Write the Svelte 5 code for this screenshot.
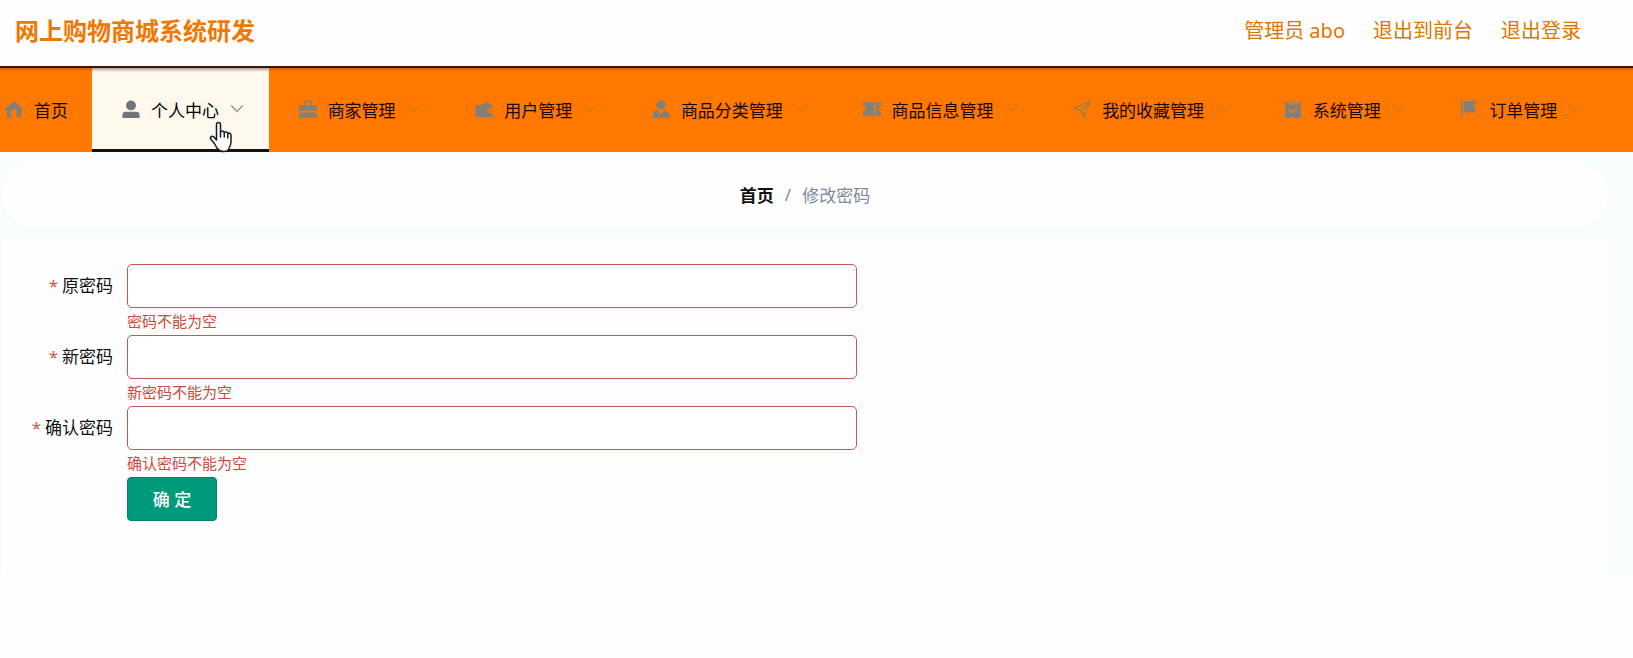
<script lang="ts">
	interface MenuItem {
		label: string;
		icon: string;
		active?: boolean;
	}

	interface Field {
		id: string;
		label: string;
		error: string;
	}

	const menus: MenuItem[] = [
		{ label: '个人中心', icon: 'user', active: true },
		{ label: '商家管理', icon: 'briefcase' },
		{ label: '用户管理', icon: 'wallet' },
		{ label: '商品分类管理', icon: 'custom' },
		{ label: '商品信息管理', icon: 'ticket' },
		{ label: '我的收藏管理', icon: 'position' },
		{ label: '系统管理', icon: 'claim' },
		{ label: '订单管理', icon: 'flag' }
	];

	const fields: Field[] = [
		{ id: 'password', label: '原密码', error: '密码不能为空' },
		{ id: 'newpassword', label: '新密码', error: '新密码不能为空' },
		{ id: 'repassword', label: '确认密码', error: '确认密码不能为空' }
	];

	let form: Record<string, string> = $state({ password: '', newpassword: '', repassword: '' });
</script>

{#snippet icon(name: string)}
	<svg class="icon" viewBox="0 0 20 20" aria-hidden="true">
		{#if name === 'home'}
			<path d="M10 1 .5 9.5V11H2v8.500h5V13a3 3 0 0 1 6 0v6.500h5V11h1.500V9.500z" />
		{:else if name === 'user'}
			<circle cx="10" cy="6" r="5.5" />
			<path d="M.5 20v-3.500A3.500 3.500 0 0 1 4 13h12a3.500 3.500 0 0 1 3.500 3.500V20z" />
		{:else if name === 'briefcase'}
			<path
				fill-rule="evenodd"
				d="M5.500 6V3A2.500 2.500 0 0 1 8 .5h4A2.500 2.500 0 0 1 14.500 3v3H19a1 1 0 0 1 1 1v5H0V7a1 1 0 0 1 1-1zM7 6h6V3a1 1 0 0 0-1-1H8a1 1 0 0 0-1 1zM0 14h20v5a1 1 0 0 1-1 1H1a1 1 0 0 1-1-1z"
			/>
		{:else if name === 'wallet'}
			<path
				d="M7 5.500 14 1l3 4.500h1.500a1 1 0 0 1 1 1v3H16a2.500 2.500 0 0 0 0 5h3.500V18a1 1 0 0 1-1 1h-17a1 1 0 0 1-1-1V6.500a1 1 0 0 1 1-1z"
			/>
			<circle cx="16.5" cy="12" r="1" />
		{:else if name === 'custom'}
			<circle cx="10" cy="5.5" r="5" />
			<path d="M0 20c0-5 2-8 6-9l4 5 4-5c4 1 6 4 6 9z" />
		{:else if name === 'ticket'}
			<path d="M0 2.500h12.500v15H0V13a3 3 0 0 0 0-6zM14 2.500h6V7a3 3 0 0 0 0 6v4.500h-6z" />
		{:else if name === 'position'}
			<path class="line" d="M19 1 1 9l8 3 2.500 7.500zM9 12l9.500-10.500" />
		{:else if name === 'claim'}
			<path
				fill-rule="evenodd"
				d="M2 2.500h3.500V5h9V2.500H18a1 1 0 0 1 1 1V19a1 1 0 0 1-1 1H2a1 1 0 0 1-1-1V3.500a1 1 0 0 1 1-1zM5 11l4 4.300L15.300 9l-1.200-1.200-5 5.200-2.900-3.200z"
			/>
			<path d="M7 3.500V2h2V.5h2V2h2v1.500z" />
		{:else if name === 'flag'}
			<path d="M1 .5h1.500V20H1zM4 1h15l-4 6.500 4 6.500H4z" />
		{/if}
	</svg>
{/snippet}

<header class="header">
	<h1 class="title">网上购物商城系统研发</h1>
	<div class="account">
		<span>管理员 abo</span>
		<a href="#front">退出到前台</a>
		<a href="#logout">退出登录</a>
	</div>
</header>

<nav class="nav">
	<a class="nav-item nav-item--home" href="#home">
		{@render icon('home')}
		<span>首页</span>
	</a>
	{#each menus as menu}
		<button class="nav-item" class:nav-item--active={menu.active} type="button">
			{@render icon(menu.icon)}
			<span>{menu.label}</span>
			<svg class="arrow" viewBox="0 0 12 12" aria-hidden="true">
				<path d="M1 3 6 8l5-5" />
			</svg>
			{#if menu.active}
				<svg class="pointer" viewBox="0 0 24 32" aria-hidden="true">
					<path
						d="M7.500 19V3.500a2 2 0 0 1 4 0V11c.5-1.500 3.500-1.500 3.800.5.7-1 3.200-.8 3.500 1 .8-.9 3.200-.5 3.200 1.700V21c0 3-1.500 4.500-2 6.500-.7 2-2 3-5 3-3.500 0-5.500-1-7-3.500-1.500-3-3.500-6-6-8.500-1.500-2 .8-4 2.700-2.700z"
					/>
					<path d="M11.500 11v5M15.300 11.500V16M18.800 12.500V17" />
				</svg>
			{/if}
		</button>
	{/each}
</nav>

<main class="main">
	<nav class="breadcrumb" aria-label="breadcrumb">
		<a href="#home">首页</a>
		<span>/</span>
		<span>修改密码</span>
	</nav>

	<form class="panel">
		{#each fields as field}
			<div class="field">
				<label for={field.id}><span class="star">*</span>{field.label}</label>
				<div>
					<input id={field.id} type="password" bind:value={form[field.id]} />
					<p class="error">{field.error}</p>
				</div>
			</div>
		{/each}
		<div class="field">
			<button class="submit" type="button">确 定</button>
		</div>
	</form>
</main>

<style>
	:global(body) {
		background: #fefefe;
		color: #111;
		font-family: 'Noto Sans', 'Noto Sans CJK SC', sans-serif;
		font-size: 17px;
	}

	.header {
		display: flex;
		align-items: center;
		justify-content: space-between;
		height: 66px;
		padding: 0 52px 4px 15px;
		box-sizing: border-box;
		background: #fefefe;
		color: #f07800;
	}

	.title {
		margin: 0;
		font-size: 24px;
		line-height: 32px;
	}

	.account {
		display: flex;
		gap: 28px;
		font-size: 20px;
		line-height: 32px;
		color: #dc7800;
	}

	.account a {
		color: inherit;
		text-decoration: none;
	}

	.nav {
		display: flex;
		height: 84px;
		padding-right: 26px;
		border-top: 2px solid #401400;
		background: linear-gradient(#c85a00, #ff7800 3px);
	}

	.nav-item {
		position: relative;
		display: flex;
		flex: 1 0 auto;
		align-items: center;
		gap: 11px;
		padding: 1px 24px 0 30px;
		border: 0;
		border-bottom: 3px solid transparent;
		background: none;
		color: #180800;
		font: inherit;
		text-decoration: none;
		white-space: nowrap;
		cursor: pointer;
	}

	.nav-item--home {
		flex: none;
		padding: 1px 24px 0 5px;
	}

	.nav-item--active {
		border-bottom-color: #111;
		background: linear-gradient(#a8a098, #fef9ec 4px);
		color: #000;
	}

	.icon {
		width: 18px;
		height: 18px;
		fill: #83807a;
	}

	.icon .line {
		fill: none;
		stroke: #a0803c;
		stroke-width: 1.5;
		stroke-linejoin: round;
	}

	.nav-item--active .icon {
		fill: #6e767c;
	}

	.arrow {
		width: 14px;
		height: 14px;
		fill: none;
		stroke: #c88418;
	}

	.nav-item--active .arrow {
		stroke: #8c8c84;
	}

	.pointer {
		position: absolute;
		right: 36px;
		bottom: -4px;
		z-index: 1;
		width: 24px;
		height: 32px;
		fill: #fff;
		stroke: #181828;
		stroke-width: 1.5;
		stroke-linejoin: round;
		stroke-linecap: round;
	}

	.main {
		padding: 11px 25px 0 2px;
		background: #f7fdfd;
	}

	.breadcrumb {
		display: flex;
		align-items: center;
		justify-content: center;
		gap: 11px;
		height: 63px;
		border-radius: 30px;
		background: #fefefe;
		color: #7c8a9c;
	}

	.breadcrumb a {
		color: #111;
		font-weight: 700;
		text-decoration: none;
	}

	.panel {
		min-height: 336px;
		margin-top: 11px;
		padding-top: 27px;
		box-sizing: border-box;
		background: #fefefe;
	}

	.field {
		display: grid;
		grid-template-columns: 111px minmax(0, 730px);
		column-gap: 14px;
	}

	label {
		line-height: 44px;
		text-align: right;
		white-space: nowrap;
	}

	.star {
		margin-right: 4px;
		color: #d0584c;
	}

	input {
		display: block;
		width: 100%;
		height: 44px;
		padding: 0 16px;
		box-sizing: border-box;
		border: 1px solid #c8584e;
		border-radius: 5px;
		background: #fff;
		font: inherit;
	}

	.error {
		margin: 0;
		color: #c84c3c;
		font-size: 15px;
		line-height: 27px;
	}

	.submit {
		grid-column: 2;
		justify-self: start;
		width: 90px;
		height: 44px;
		padding: 0 0 2px;
		border: 1px solid #008468;
		border-radius: 4px;
		background: #009a7b;
		color: #fff;
		font: inherit;
		font-weight: 500;
		cursor: pointer;
	}
</style>
